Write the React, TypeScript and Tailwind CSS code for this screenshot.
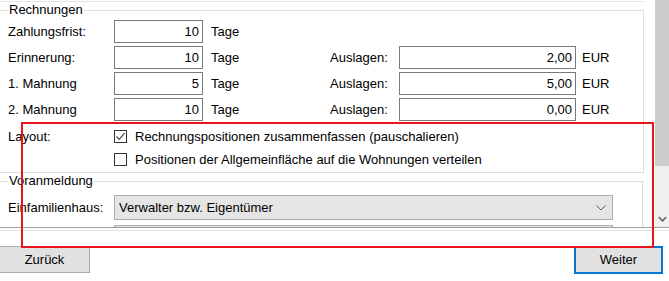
import React from "react";

function Field({ value, className }: { value: string; className: string }) {
  return (
    <div
      className={`flex h-[23px] items-center justify-end border border-[#7a7a7a] bg-white pr-[3px] ${className}`}
    >
      {value}
    </div>
  );
}

function CheckBox({ checked, label }: { checked?: boolean; label: string }) {
  return (
    <div className="flex h-[23px] items-center">
      <span className="flex h-[13px] w-[13px] items-center justify-center border border-[#333333] bg-white">
        {checked && (
          <svg width="11" height="11" viewBox="0 0 11 11">
            <polyline
              points="1.5,5.5 4.2,8.3 9.6,2.2"
              fill="none"
              stroke="#444"
              strokeWidth="1.2"
            />
          </svg>
        )}
      </span>
      <span className="ml-[8px]">{label}</span>
    </div>
  );
}

const ROWS = [
  { label: "Zahlungsfrist:", days: "10", fee: null },
  { label: "Erinnerung:", days: "10", fee: "2,00" },
  { label: "1. Mahnung", days: "5", fee: "5,00" },
  { label: "2. Mahnung", days: "10", fee: "0,00" },
];

export default function App() {
  return (
    <div className="relative h-[281px] w-[669px] overflow-hidden bg-white font-['Liberation_Sans',Arial,sans-serif] text-[13px] leading-[16px] text-black">
      <div className="flex h-[227px]">
        <div className="w-[655px] overflow-hidden">
          <div className="h-[2px] w-[644px] border-b border-[#e3e3e3]" />

          {/* Rechnungen */}
          <fieldset className="w-[644px] border border-l-0 border-[#dcdcdc] pb-[1px] pt-[2px]">
            <legend className="ml-[8px] h-[16px] px-[1px]">Rechnungen</legend>
            <div className="flex flex-col gap-[3px]">
              {ROWS.map((r) => (
                <div key={r.label} className="flex h-[23px] items-center">
                  <span className="w-[114px] pl-[8px]">{r.label}</span>
                  <Field value={r.days} className="w-[89px]" />
                  <span className="ml-[8px] w-[119px]">Tage</span>
                  {r.fee && (
                    <>
                      <span className="w-[69px]">Auslagen:</span>
                      <Field value={r.fee} className="w-[177px]" />
                      <span className="ml-[6px]">EUR</span>
                    </>
                  )}
                </div>
              ))}
            </div>
            <div className="mt-[4px] flex">
              <span className="w-[114px] pl-[8px] leading-[23px]">Layout:</span>
              <div className="flex flex-col">
                <CheckBox checked label="Rechnungspositionen zusammenfassen (pauschalieren)" />
                <CheckBox label="Positionen der Allgemeinfläche auf die Wohnungen verteilen" />
              </div>
            </div>
          </fieldset>

          {/* Voranmeldung */}
          <fieldset className="w-[643px] border border-l-0 border-[#dcdcdc] pt-[6px]">
            <legend className="ml-[8px] h-[16px] px-[1px]">Voranmeldung</legend>
            <div className="flex items-center">
              <span className="w-[114px] pl-[8px]">Einfamilienhaus:</span>
              <div className="flex h-[25px] w-[499px] items-center justify-between border border-[#adadad] bg-[#e5e5e5] pl-[4px] pr-[6px]">
                <span>Verwalter bzw. Eigentümer</span>
                <svg width="10" height="6" viewBox="0 0 10 6">
                  <polyline points="0.5,0.5 5,5 9.5,0.5" fill="none" stroke="#606060" strokeWidth="1" />
                </svg>
              </div>
            </div>
            <div className="ml-[114px] mt-[5px] h-[25px] w-[499px] border border-[#adadad] bg-[#e5e5e5]" />
          </fieldset>
        </div>

        {/* Scrollbar */}
        <div className="flex w-[14px] flex-col bg-[#f0f0f0]">
          <div className="h-[166px] bg-[#cdcdcd]" />
          <div className="flex-1" />
          <div className="flex h-[17px] items-center justify-center">
            <svg width="9" height="6" viewBox="0 0 9 6">
              <polyline points="0.8,1 4.5,4.8 8.2,1" fill="none" stroke="#606060" strokeWidth="1.5" />
            </svg>
          </div>
        </div>
      </div>

      {/* Button bar */}
      <div className="border-t border-[#a0a0a0]">
        <div className="mt-[2px] border-t border-[#e3e3e3]" />
        <div className="mt-[15px] flex justify-between pr-[6px]">
          <button className="h-[27px] w-[90px] border border-l-0 border-[#adadad] bg-[#e1e1e1]">
            Zurück
          </button>
          <button className="h-[28px] w-[89px] border-2 border-[#0078d7] bg-[#e1e1e1]">
            Weiter
          </button>
        </div>
      </div>

      {/* Markierung */}
      <div className="absolute left-[21px] top-[122px] h-[126px] w-[633px] border-2 border-[#e8141c]" />
    </div>
  );
}
